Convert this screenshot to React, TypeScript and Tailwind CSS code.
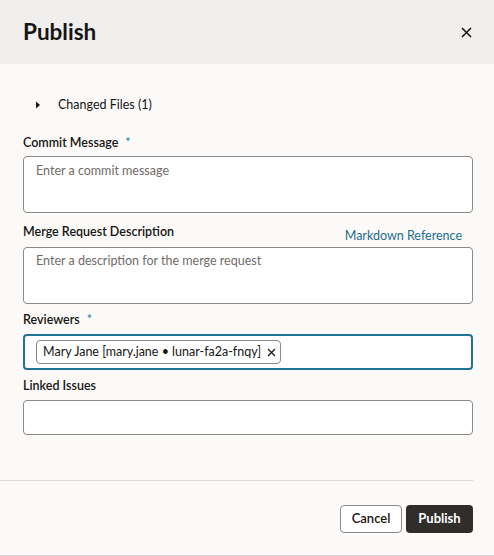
import React from "react";

export default function App() {
  return (
    <div className="w-[494px] h-[556px] bg-[#fbfaf8] flex flex-col text-[#161513] border-b border-[#d6d3cf]" style={{ fontFamily: "Lato, 'Noto Sans', sans-serif" }}>
      <div className="h-16 shrink-0 bg-[#f1efed] flex items-center justify-between pl-[23px] pr-[18px]">
        <h1 className="text-[22.5px] font-bold leading-none">Publish</h1>
        <button className="w-5 h-5 flex items-center justify-center">
          <svg width="11" height="11" viewBox="0 0 11 11">
            <path d="M1 1L10 10M10 1L1 10" stroke="#161513" strokeWidth="1.6" />
          </svg>
        </button>
      </div>
      <div className="flex-1 pl-[23px] pr-[21px] text-[12.5px]">
        <div className="h-6 mt-[29px] flex items-center">
          <svg width="6" height="8" viewBox="0 0 6 8" className="ml-[12px]">
            <path d="M1 0.5L5 4L1 7.5Z" fill="#161513" />
          </svg>
          <span className="ml-[17px]">Changed Files (1)</span>
        </div>
        <div className="mt-[17px] h-[18px] flex items-center font-semibold">
          Commit Message <span className="ml-[7px] text-[#227e9e] font-normal">*</span>
        </div>
        <div className="mt-1 h-[57px] border border-[#8d8b88] rounded-[4px] bg-white px-[12px] pt-[5px] text-[#6f6c69]">
          Enter a commit message
        </div>
        <div className="mt-[10px] h-[18px] flex items-center justify-between">
          <span className="font-semibold">Merge Request Description</span>
          <span className="text-[#1f6e8c] mr-[11px] translate-y-[4px]">Markdown Reference</span>
        </div>
        <div className="mt-[6px] h-[57px] border border-[#8d8b88] rounded-[4px] bg-white px-[12px] pt-[4px] text-[#6f6c69]">
          Enter a description for the merge request
        </div>
        <div className="mt-[7px] h-[18px] flex items-center font-semibold">
          Reviewers <span className="ml-[7px] text-[#227e9e] font-normal">*</span>
        </div>
        <div className="mt-[5px] h-9 border-2 border-[#227397] rounded-[4px] bg-white flex items-center pl-[11px]">
          <div className="h-[24px] border border-[#8d8b88] rounded-[4px] flex items-center pl-[6px] pr-[4px]">
            <span>Mary Jane [mary.jane • lunar-fa2a-fnqy]</span>
            <svg width="9" height="9" viewBox="0 0 9 9" className="ml-[6px]">
              <path d="M1 1L8 8M8 1L1 8" stroke="#161513" strokeWidth="1.2" />
            </svg>
          </div>
        </div>
        <div className="mt-[7px] h-[18px] flex items-center font-semibold">Linked Issues</div>
        <div className="mt-[5px] h-[35px] border border-[#8d8b88] rounded-[4px] bg-white" />
      </div>
      <div className="w-[473px] h-px bg-[#dcd9d5] mb-[24px]" />
      <div className="flex justify-end gap-1 pr-[21px] pb-[22px]">
        <button className="h-7 w-[62px] border border-[#8d8b88] rounded-[4px] bg-white text-[13px] font-semibold">Cancel</button>
        <button className="h-7 w-[67px] rounded-[4px] bg-[#312d2a] text-white text-[13px] font-bold">Publish</button>
      </div>
    </div>
  );
}
